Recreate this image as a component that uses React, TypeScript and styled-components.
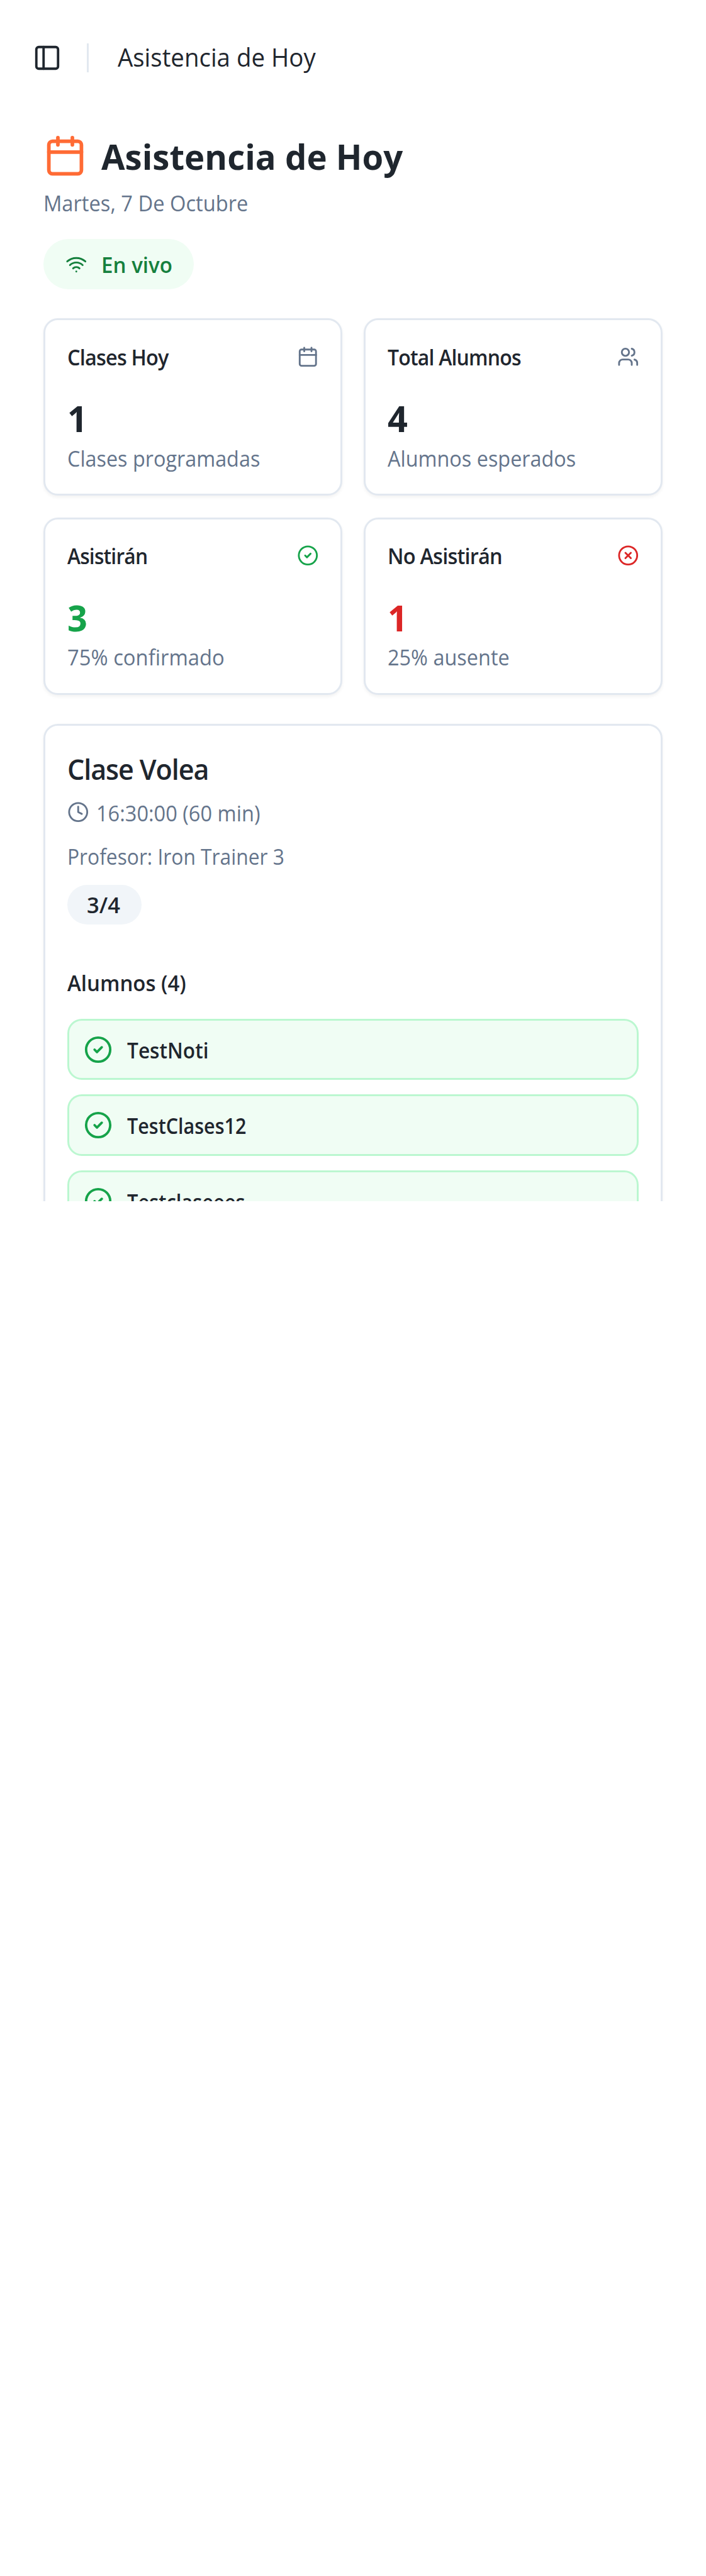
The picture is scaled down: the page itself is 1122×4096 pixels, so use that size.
import React from "react";
import styled, { createGlobalStyle, css } from "styled-components";
import {
  Calendar,
  CircleCheck,
  CircleX,
  Clock,
  PanelLeft,
  Users,
  Wifi,
} from "lucide-react";

const SCALE = 1122 / 1170;
const n = (v: number) => v * SCALE;
const u = (v: number) => `${(v * SCALE).toFixed(3)}px`;

const color = {
  ink: "#1f262e",
  muted: "#64748b",
  line: "#e2e8f0",
  green: "#16a34a",
  greenDark: "#15803d",
  greenSoft: "#f0fdf4",
  greenLine: "#bbf7d0",
  red: "#dc2626",
  orange: "#ff6b35",
  chip: "#f1f5f9",
};

const Global = createGlobalStyle`
  *, *::before, *::after { box-sizing: border-box; }
  body {
    margin: 0;
    background: #ffffff;
    color: ${color.ink};
    font-family: "Open Sans", "Noto Sans", sans-serif;
  }
  h1, h2, h3, p, ul { margin: 0; padding: 0; }
  svg { display: block; flex: none; }
`;

const Screen = styled.div`
  width: ${u(1170)};
  height: ${u(1992)};
  overflow: hidden;
`;

const Header = styled.header`
  display: flex;
  align-items: center;
  height: ${u(192)};
  padding: 0 ${u(54)};
`;

const Separator = styled.div`
  width: 3px;
  height: ${u(48)};
  margin: 0 ${u(48)} 0 ${u(42)};
  background: ${color.line};
`;

const Fit = styled.span<{ $x: number; $dy?: number }>`
  display: inline-block;
  white-space: nowrap;
  transform: translateY(${(p) => u(p.$dy ?? 0)}) scaleX(${(p) => p.$x});
  transform-origin: left center;
`;

const body = css`
  font-size: ${u(35.3)};
  line-height: ${u(48)};
`;

const HeaderTitle = styled.span`
  font-size: ${u(41.2)};
  line-height: ${u(60)};
`;

const Main = styled.main`
  display: flex;
  flex-direction: column;
  padding: ${u(24)} ${u(72)} 0;
`;

const TitleRow = styled.div`
  display: flex;
  align-items: center;
  gap: ${u(24)};
  height: ${u(84)};
`;

const Title = styled.h1`
  font-size: ${u(58.8)};
  line-height: ${u(84)};
  font-weight: 700;
`;

const Muted = styled.p`
  ${body}
  color: ${color.muted};
`;

const DateLine = styled(Muted)`
  margin-top: ${u(12)};
`;

const LiveBadge = styled.div`
  display: flex;
  align-items: center;
  align-self: flex-start;
  gap: ${u(24)};
  width: ${u(249)};
  height: ${u(84)};
  margin-top: ${u(36)};
  padding: 0 ${u(36)};
  border-radius: ${u(42)};
  background: ${color.greenSoft};
  color: ${color.greenDark};
  font-weight: 600;
  ${body}
`;

const Stats = styled.section`
  display: grid;
  grid-template-columns: 1fr 1fr;
  gap: ${u(36)};
  margin-top: ${u(48)};
`;

const card = css`
  border: 3px solid ${color.line};
  border-radius: ${u(24)};
  background: #ffffff;
  box-shadow: 0 ${u(3)} ${u(6)} rgba(0, 0, 0, 0.05);
  padding: ${u(36)};
`;

const StatCard = styled.article`
  ${card}
  height: ${u(294)};
`;

const StatHead = styled.div<{ $tone: string }>`
  display: flex;
  align-items: center;
  justify-content: space-between;
  height: ${u(48)};
  svg {
    color: ${(p) => p.$tone};
  }
`;

const StatTitle = styled.h3`
  ${body}
  font-weight: 600;
  letter-spacing: -0.025em;
`;

const StatValue = styled.div<{ $tone: string }>`
  margin-top: ${u(36)};
  font-size: ${u(60)};
  line-height: ${u(84)};
  font-weight: 700;
  color: ${(p) => p.$tone};
`;

const ClassCard = styled.section`
  ${card}
  display: flex;
  flex-direction: column;
  margin-top: ${u(48)};
`;

const ClassTitle = styled.h2`
  font-size: ${u(47)};
  line-height: ${u(72)};
  font-weight: 600;
  letter-spacing: -0.025em;
`;

const TimeRow = styled(Muted)`
  display: flex;
  align-items: center;
  gap: ${u(12)};
  margin-top: ${u(12)};
`;

const Teacher = styled(Muted)`
  margin-top: ${u(24)};
`;

const CountChip = styled.div`
  ${body}
  display: flex;
  align-items: center;
  align-self: flex-start;
  width: ${u(123)};
  height: ${u(66)};
  margin-top: ${u(24)};
  padding: 0 ${u(33)};
  border-radius: ${u(33)};
  background: ${color.chip};
  font-weight: 600;
`;

const ListTitle = styled.h3`
  ${body}
  margin-top: ${u(72)};
  font-weight: 600;
`;

const StudentList = styled.ul`
  display: flex;
  flex-direction: column;
  gap: ${u(24)};
  margin-top: ${u(36)};
  list-style: none;
`;

const Student = styled.li`
  ${body}
  display: flex;
  align-items: center;
  gap: ${u(24)};
  height: ${u(102)};
  padding: 0 ${u(24)};
  border: 3px solid ${color.greenLine};
  border-radius: ${u(24)};
  background: ${color.greenSoft};
  font-weight: 600;
  svg {
    color: ${color.green};
  }
`;

const stats = [
  { title: "Clases Hoy", tx: 0.959, value: "1", label: "Clases programadas", lx: 0.956, icon: Calendar, tone: color.muted, ink: color.ink },
  { title: "Total Alumnos", tx: 0.944, value: "4", label: "Alumnos esperados", lx: 0.957, icon: Users, tone: color.muted, ink: color.ink },
  { title: "Asistirán", tx: 0.938, value: "3", label: "75% confirmado", lx: 0.969, icon: CircleCheck, tone: color.green, ink: color.green },
  { title: "No Asistirán", tx: 0.962, value: "1", label: "25% ausente", lx: 0.959, icon: CircleX, tone: color.red, ink: color.red },
];

const students = [
  { name: "TestNoti", x: 0.935 },
  { name: "TestClases12", x: 0.901 },
  { name: "Testclaseees", x: 0.911 },
];

export default function App() {
  return (
    <>
      <Global />
      <Screen>
        <Header>
          <PanelLeft size={n(48)} />
          <Separator />
          <HeaderTitle>
            <Fit $x={0.973} $dy={0}>Asistencia de Hoy</Fit>
          </HeaderTitle>
        </Header>
        <Main>
          <TitleRow>
            <Calendar size={n(72)} color={color.orange} />
            <Title>
              <Fit $x={0.967} $dy={2.5}>Asistencia de Hoy</Fit>
            </Title>
          </TitleRow>
          <DateLine>
            <Fit $x={0.965} $dy={1.3}>Martes, 7 De Octubre</Fit>
          </DateLine>
          <LiveBadge>
            <Wifi size={n(36)} />
            <Fit $x={0.979} $dy={1.3}>En vivo</Fit>
          </LiveBadge>
          <Stats>
            {stats.map((s) => (
              <StatCard key={s.title}>
                <StatHead $tone={s.tone}>
                  <StatTitle>
                    <Fit $x={s.tx} $dy={1.3}>{s.title}</Fit>
                  </StatTitle>
                  <s.icon size={n(36)} />
                </StatHead>
                <StatValue $tone={s.ink}>
                  <Fit $x={0.97} $dy={1.5}>{s.value}</Fit>
                </StatValue>
                <Muted>
                  <Fit $x={s.lx} $dy={1.5}>{s.label}</Fit>
                </Muted>
              </StatCard>
            ))}
          </Stats>
          <ClassCard>
            <ClassTitle>
              <Fit $x={0.956}>Clase Volea</Fit>
            </ClassTitle>
            <TimeRow>
              <Clock size={n(36)} />
              <Fit $x={0.962} $dy={1}>16:30:00 (60 min)</Fit>
            </TimeRow>
            <Teacher>
              <Fit $x={0.938} $dy={1}>Profesor: Iron Trainer 3</Fit>
            </Teacher>
            <CountChip>
              <Fit $x={1.02} $dy={1}>3/4</Fit>
            </CountChip>
            <ListTitle>
              <Fit $x={0.974} $dy={1.3}>Alumnos (4)</Fit>
            </ListTitle>
            <StudentList>
              {students.map((s) => (
                <Student key={s.name}>
                  <CircleCheck size={n(48)} />
                  <Fit $x={s.x} $dy={1}>{s.name}</Fit>
                </Student>
              ))}
            </StudentList>
          </ClassCard>
        </Main>
      </Screen>
    </>
  );
}
